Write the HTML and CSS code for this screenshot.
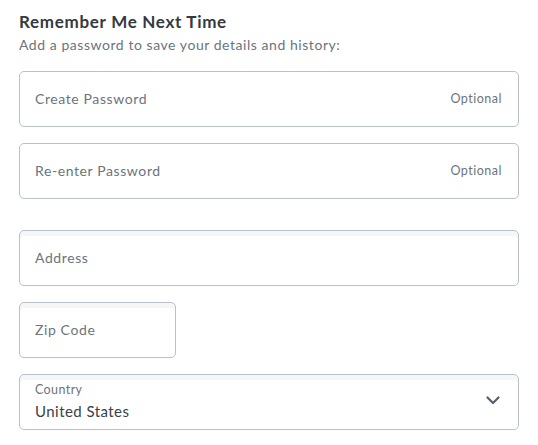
FILE: index.html
```html
<!DOCTYPE html>
<html>
<head>
<meta charset="utf-8">
<link rel="stylesheet" href="styles.css">
</head>
<body>
<div class="form">
  <h2 class="title">Remember Me Next Time</h2>
  <p class="subtitle">Add a password to save your details and history:</p>
  <div class="group">
    <div class="field"><span class="label">Create Password</span><span class="hint">Optional</span></div>
    <div class="field"><span class="label">Re-enter Password</span><span class="hint">Optional</span></div>
  </div>
  <div class="group second">
    <div class="field inset"><span class="label">Address</span></div>
    <div class="field inset zip"><span class="label">Zip Code</span></div>
    <div class="field inset select">
      <div class="stack">
        <span class="small-label">Country</span>
        <span class="value">United States</span>
      </div>
      <svg class="chev" width="14" height="9" viewBox="0 0 14 9"><path d="M1.5 1.5 L7 7 L12.5 1.5" fill="none" stroke="#56606b" stroke-width="2.2" stroke-linecap="round" stroke-linejoin="round"/></svg>
    </div>
  </div>
</div>
</body>
</html>
```
FILE: styles.css
```css
html, body { margin: 0; padding: 0; background: #fff; }
body { font-family: "Lato", "Open Sans", sans-serif; }
.form { padding: 12px 19px 0 19px; width: 500px; }
.title { margin: 0; font-size: 17px; font-weight: 700; color: #343a40; line-height: 20px; letter-spacing: 0.7px; }
.subtitle { margin: 4px 0 0 0; font-size: 14px; color: #6c747c; line-height: 18px; letter-spacing: 0.55px; }
.group { display: flex; flex-direction: column; gap: 16px; margin-top: 17px; }
.group.second { margin-top: 31px; }
.field {
  box-sizing: border-box; height: 56px; width: 500px;
  border: 1px solid #b9c0c7; border-radius: 5px;
  display: flex; align-items: center; justify-content: space-between;
  padding: 0 16px 2px 15px;
}
.inset { box-shadow: inset 0 5px 0 #f5f6f8; }
.zip { width: 157px; }
.label { font-size: 14px; color: #6c747c; letter-spacing: 0.6px; }
.hint { font-size: 12.5px; color: #6c747c; letter-spacing: 0.5px; }
.select { padding-bottom: 1px; }
.stack { display: flex; flex-direction: column; }
.small-label { font-size: 12.5px; color: #6c747c; line-height: 16px; letter-spacing: 0.4px; }
.value { font-size: 15px; color: #3a4148; line-height: 20px; margin-top: 3px; letter-spacing: 0.45px; }
.chev { margin-right: 2px; margin-top: -2px; }
```
